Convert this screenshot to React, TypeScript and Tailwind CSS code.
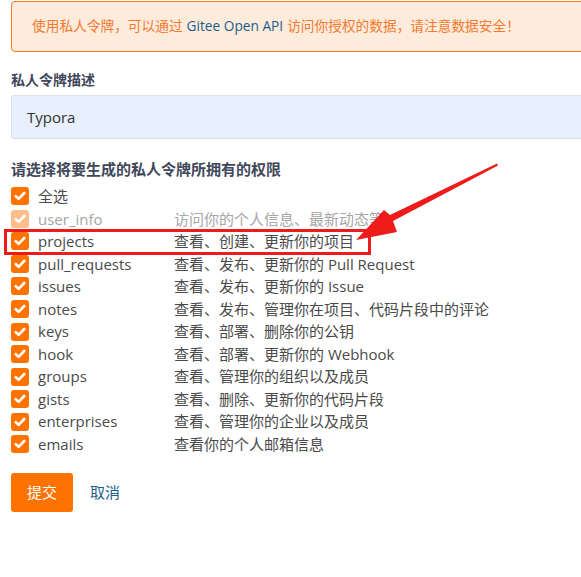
import { Fragment } from 'react';

const font = { fontFamily: '"Open Sans", "Noto Sans CJK SC", sans-serif' };

const scopes = [
  { name: '全选', desc: '' },
  { name: 'user_info', desc: '访问你的个人信息、最新动态等', disabled: true },
  { name: 'projects', desc: '查看、创建、更新你的项目', marked: true },
  { name: 'pull_requests', desc: '查看、发布、更新你的 Pull Request' },
  { name: 'issues', desc: '查看、发布、更新你的 Issue' },
  { name: 'notes', desc: '查看、发布、管理你在项目、代码片段中的评论' },
  { name: 'keys', desc: '查看、部署、删除你的公钥' },
  { name: 'hook', desc: '查看、部署、更新你的 Webhook' },
  { name: 'groups', desc: '查看、管理你的组织以及成员' },
  { name: 'gists', desc: '查看、删除、更新你的代码片段' },
  { name: 'enterprises', desc: '查看、管理你的企业以及成员' },
  { name: 'emails', desc: '查看你的个人邮箱信息' },
];

function Check({ disabled }: { disabled?: boolean }) {
  return (
    <span
      className={
        'flex h-[18px] w-[18px] shrink-0 items-center justify-center rounded-[3px] ' +
        (disabled ? 'bg-[#ffbe8c]' : 'bg-[#fe7300]')
      }
    >
      <svg width="12" height="10" viewBox="0 0 12 10">
        <path d="M1.8 5.2 4.6 7.8 10.2 2" fill="none" stroke="#fff" strokeWidth="2.6" strokeLinecap="round" strokeLinejoin="round" />
      </svg>
    </span>
  );
}

export default function App() {
  return (
    <div className="relative h-[577px] w-[581px] overflow-hidden bg-white" style={font}>
      <div className="w-[640px] pl-[11px]">
        <div className="mt-px flex h-[51px] items-center rounded-[4px] border border-[#f7781f] bg-[#fdebdc] pl-[20px] text-[13.7px] text-[#f47a30]">
          使用私人令牌，可以通过 <span className="mx-[4px] text-[#1d5d8a]">Gitee Open API</span> 访问你授权的数据，请注意数据安全！
        </div>

        <div className="mt-[18px] text-[14px] font-bold leading-[20px] text-[#40475a]">私人令牌描述</div>
        <div className="mt-[5px] flex h-[44px] items-center rounded-[3px] border border-[#dcdfe6] bg-[#e8f0fe] pl-[15px] text-[15px] text-[#333]">
          Typora
        </div>

        <div className="mt-[19px] text-[15px] font-bold leading-[22px] text-[#40475a]">
          请选择将要生成的私人令牌所拥有的权限
        </div>

        <div className="mt-[5px] flex flex-col">
          {scopes.map((s) => (
            <Fragment key={s.name}>
              <div className="relative flex h-[22.55px] items-center text-[15px]">
                <Check disabled={s.disabled} />
                <span className={'ml-[9px] w-[136px] ' + (s.disabled ? 'text-[#a6a6a6]' : 'text-[#4a4a4a]')}>{s.name}</span>
                <span className={s.disabled ? 'text-[#a6a6a6]' : 'text-[#4a4a4a]'}>{s.desc}</span>
                {s.marked && (
                  <span className="absolute left-[-7px] top-[-1px] h-[26px] w-[367px] border-[3px] border-[#ee1b1b]" />
                )}
              </div>
            </Fragment>
          ))}
        </div>

        <div className="mt-[17px] flex items-center">
          <button className="h-[39px] w-[62px] rounded-[3px] bg-[#fe7300] text-[15px] text-white">提交</button>
          <span className="ml-[17px] text-[15px] text-[#1d5d8a]">取消</span>
        </div>
      </div>

      <svg className="absolute left-0 top-0" width="581" height="577">
        <polygon
          points="497,163.5 498,165.5 393,221 397,232 356,240 384,210 390,215"
          fill="#ee1b1b"
        />
      </svg>
    </div>
  );
}
